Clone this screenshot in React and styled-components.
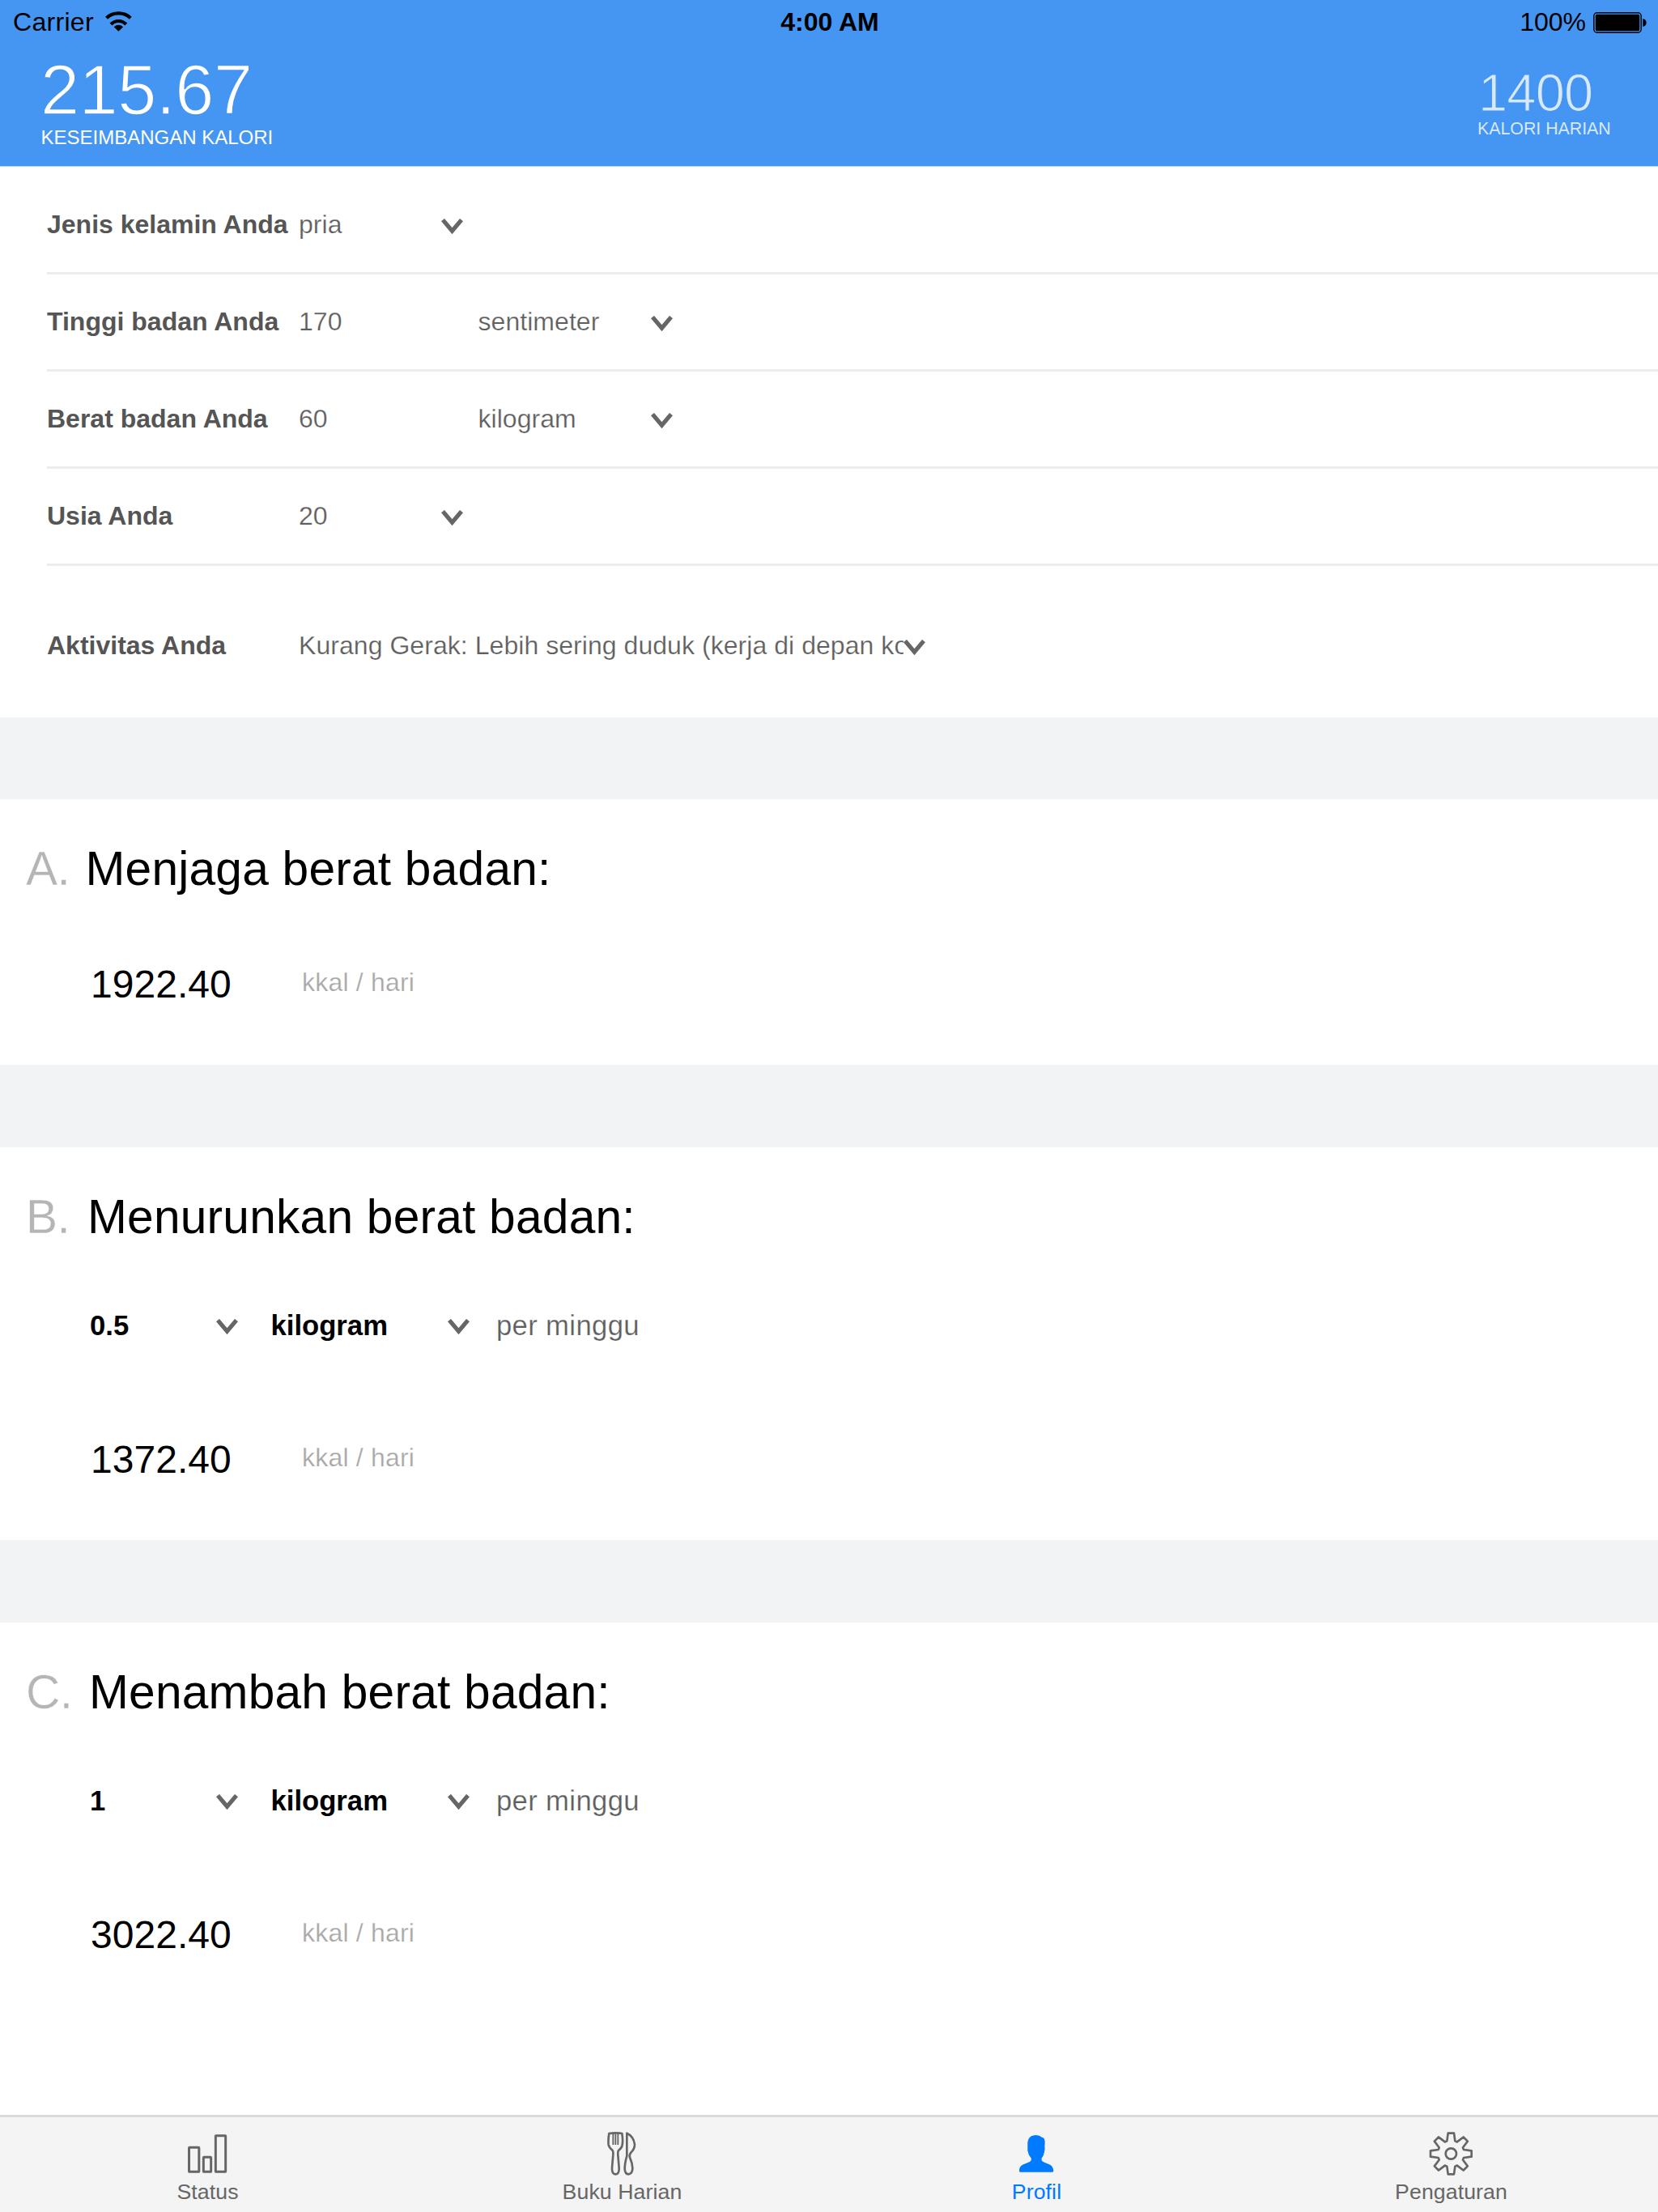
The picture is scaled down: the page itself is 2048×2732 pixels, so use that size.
import React from "react";
import styled, { createGlobalStyle, css } from "styled-components";

const BLUE = "#4595f2";
const INK = "#666666";

const GlobalStyle = createGlobalStyle`
  * { box-sizing: border-box; }
  body {
    margin: 0;
    background: #ffffff;
    font-family: "Liberation Sans", Arial, Helvetica, sans-serif;
    font-size: 32px;
  }
`;

/* A stroke in the surface colour slims the glyphs down to a light weight. */
const slim = (width, surface) => css`
  -webkit-text-stroke: ${width}px ${surface};
`;

const Screen = styled.div`
  display: flex;
  flex-direction: column;
  width: 2048px;
  height: 2732px;
  overflow: hidden;
  background: #ffffff;
`;

/* Header */

const Header = styled.header`
  flex: none;
  height: 206px;
  background: ${BLUE};
  border-bottom: 1px solid #b4d6fa;
`;

const StatusBar = styled.div`
  display: grid;
  grid-template-columns: 1fr auto 1fr;
  align-items: center;
  height: 55px;
  padding: 0 14px 0 16px;
  line-height: 55px;
  color: #000000;
`;

const Carrier = styled.div`
  display: flex;
  align-items: center;
  gap: 14px;
  letter-spacing: 0.3px;

  svg {
    margin-bottom: 2px;
  }
`;

const Clock = styled.div`
  font-weight: 700;
`;

const Power = styled.div`
  display: flex;
  align-items: center;
  justify-content: flex-end;
  gap: 9px;
`;

const Summary = styled.div`
  display: flex;
  justify-content: space-between;
  padding: 12px 58px 0 50px;
`;

const Balance = styled.div`
  color: #ffffff;
`;

const BalanceValue = styled.div`
  font-size: 86.5px;
  line-height: 89px;
  letter-spacing: -0.5px;
  ${slim(1.5, BLUE)}
`;

const BalanceLabel = styled.div`
  padding-left: 0.5px;
  font-size: 24px;
  line-height: 28px;
`;

const Daily = styled.div`
  width: 165px;
  padding-top: 14px;
  color: #d8e8fd;
  white-space: nowrap;
`;

const DailyValue = styled.div`
  padding-left: 1px;
  font-size: 65px;
  line-height: 68px;
  letter-spacing: -0.8px;
  ${slim(1.2, BLUE)}
`;

const DailyLabel = styled.div`
  font-size: 21.33px;
  line-height: 21px;
`;

/* Profile form */

const Form = styled.section`
  flex: none;
  height: 679.5px;
  padding-left: 58px;
`;

const FormRow = styled.div`
  display: flex;
  align-items: center;
  height: ${(p) => p.$height || 120}px;
  padding-top: ${(p) => p.$top || 0}px;
  border-bottom: ${(p) => (p.$last ? "none" : "3px solid #ededed")};
  color: ${INK};
  line-height: 40px;
`;

const RowLabel = styled.div`
  flex: none;
  width: 311px;
  margin-top: -2px;
  font-weight: 700;
  color: #555555;
  white-space: nowrap;
`;

const RowText = styled.div`
  flex: none;
  width: ${(p) => p.$width}px;
  margin-top: -2px;
  overflow: hidden;
  white-space: nowrap;
  color: #5e5e5e;
  letter-spacing: 0.05px;
  ${slim(0.25, "#ffffff")}
`;

const Arrow = styled.svg`
  flex: none;
  display: block;
  width: 27px;
  height: 19px;
  margin-top: ${(p) => p.$drop}px;
`;

/* Goals */

const Band = styled.div`
  flex: none;
  height: 101.33px;
  background: #f2f3f5;
`;

const Goal = styled.section`
  flex: none;
  padding: 56.4px 0 71.7px 32px;
`;

const GoalTitle = styled.h2`
  display: flex;
  margin: 0;
  font-size: 58.67px;
  font-weight: 400;
  line-height: 60px;
  letter-spacing: 0.22px;
  color: #000000;
`;

const GoalIndex = styled.span`
  flex: none;
  width: ${(p) => p.$width}px;
  letter-spacing: -0.6px;
  color: #b5b5b5;
  ${slim(0.3, "#ffffff")}
`;

const PaceRow = styled.div`
  display: flex;
  align-items: center;
  margin-top: 84px;
  padding-left: 79px;
  font-size: 34.67px;
  line-height: 40px;
`;

const PaceValue = styled.div`
  flex: none;
  width: 156px;
  font-weight: 700;
  color: #000000;
`;

const PaceMeasure = styled(PaceValue)`
  width: 218.5px;
  margin-left: 40.5px;
`;

const PaceUnit = styled.div`
  margin-left: 33px;
  color: #5e5e5e;
  letter-spacing: 0.35px;
  ${slim(0.25, "#ffffff")}
`;

const ResultRow = styled.div`
  display: flex;
  align-items: center;
  margin-top: ${(p) => p.$top}px;
  padding-left: 80px;
  line-height: 56px;
`;

const ResultValue = styled.div`
  width: 261px;
  font-size: 48px;
  letter-spacing: 0.05px;
  color: #000000;
`;

const ResultUnit = styled.div`
  margin-top: -5px;
  font-size: 32px;
  letter-spacing: 0.2px;
  color: #a8a8a8;
  ${slim(0.25, "#ffffff")}
`;

/* Tab bar */

const TabBar = styled.nav`
  flex: none;
  display: grid;
  grid-template-columns: repeat(4, 1fr);
  height: 120px;
  margin-top: auto;
  border-top: 3px solid #dadada;
  background: #f4f4f4;
`;

const Tab = styled.a`
  display: flex;
  flex-direction: column;
  align-items: center;
  padding-top: 15px;
  color: ${(p) => (p.$active ? "#007aff" : INK)};

  svg {
    display: block;
    width: 60px;
    height: 60px;
  }
`;

const TabLabel = styled.span`
  margin-top: 2px;
  padding-left: 1px;
  font-size: 26.67px;
  line-height: 30px;
  letter-spacing: 0.1px;
`;

const Chevron = ({ drop = 4 }) => (
  <Arrow viewBox="0 0 27 19" $drop={drop}>
    <path d="M2 1.6 13.5 15.2 25 1.6" fill="none" stroke="#666666" strokeWidth="5.2" />
  </Arrow>
);

const WifiIcon = () => (
  <svg width="33" height="25" viewBox="0 0 33 25" fill="none" stroke="#000" strokeWidth="4.2">
    <path d="M1.5 8.2A22 22 0 0 1 31.3 8.2" />
    <path d="M7 16A13 13 0 0 1 25.8 16" />
    <path d="M16.4 24.8 10.7 19.2Q16.4 14.4 22.1 19.2Z" fill="#000" stroke="none" />
  </svg>
);

const BatteryIcon = () => (
  <svg width="66" height="26" viewBox="0 0 66 26">
    <rect x="0.8" y="0.8" width="58.4" height="24.4" rx="4" fill="none" stroke="#000" strokeWidth="1.4" />
    <rect x="2.8" y="2.8" width="54.4" height="20.4" rx="1.5" fill="#000" />
    <path d="M61.3 8Q65.6 9 65.6 13T61.3 18Z" fill="#000" />
  </svg>
);

const StatusIcon = () => (
  <svg viewBox="138 90 180 180" fill="none" stroke="currentColor" strokeWidth="9" strokeLinejoin="round">
    <rect x="160.5" y="157" width="37" height="90" rx="2" />
    <rect x="214" y="193" width="28" height="54" rx="2" />
    <rect x="259" y="113" width="37" height="134" rx="2" />
  </svg>
);

const CutleryIcon = () => (
  <svg viewBox="204 90 180 180" fill="none" stroke="currentColor" strokeWidth="8" strokeLinejoin="round">
    <path d="M247 105Q271 101 295 105Q299 130 296 147Q295 157 282 168Q279 172 280 185L284 232Q285 256 271 256Q257 256 258 232L262 185Q263 172 260 168Q247 157 245 147Q243 130 247 105Z" />
    <path d="M262 105V147M271 105V147M280 105V147" strokeWidth="5.5" />
    <path d="M313 104V188Q305 216 305 236Q306 256 319 256Q334 254 334 233Q333 214 324 194Q321 186 327 177Q342 162 342 146Q338 115 313 104Z" />
  </svg>
);

const ProfileIcon = () => (
  <svg viewBox="150 90 180 180" fill="currentColor">
    <path d="M180 248Q177 248 177 243C177 229 184 222 196 218L214 211Q222 207 222 198Q212 188 210 175Q207 170 208 158L208 137Q211 112 239 111Q252 111 261 119Q272 120 272 139L271 156Q273 162 270 173Q268 188 259 199Q259 207 267 211L285 218C297 222 303 230 304 243Q304 248 300 248Z" />
  </svg>
);

const tooth = [[-15, -47], [-11, -76], [11, -76], [15, -47]];
const gearPath =
  Array.from({ length: 8 })
    .flatMap((_, i) => {
      const a = (i * Math.PI) / 4;
      return tooth.map(([x, y]) => [
        277 + x * Math.cos(a) - y * Math.sin(a),
        180 + x * Math.sin(a) + y * Math.cos(a),
      ]);
    })
    .map(([x, y], i) => `${i ? "L" : "M"}${x.toFixed(1)} ${y.toFixed(1)}`)
    .join("") + "Z";

const GearIcon = () => (
  <svg viewBox="186 90 180 180" fill="none" stroke="currentColor" strokeWidth="8" strokeLinejoin="round">
    <path d={gearPath} />
    <circle cx="277" cy="180" r="20" />
  </svg>
);

const fields = [
  { label: "Jenis kelamin Anda", value: "pria", width: 176, height: 133, top: 13 },
  { label: "Tinggi badan Anda", value: "170", width: 221.5, unit: "sentimeter" },
  { label: "Berat badan Anda", value: "60", width: 221.5, unit: "kilogram" },
  { label: "Usia Anda", value: "20", width: 176 },
  {
    label: "Aktivitas Anda",
    value: "Kurang Gerak: Lebih sering duduk (kerja di depan komputer)",
    width: 747,
    height: 197,
    last: true,
  },
];

const goals = [
  { index: "A.", indexWidth: 73.5, title: "Menjaga berat badan:", result: "1922.40" },
  { index: "B.", indexWidth: 76, title: "Menurunkan berat badan:", pace: "0.5", result: "1372.40" },
  { index: "C.", indexWidth: 78, title: "Menambah berat badan:", pace: "1", result: "3022.40" },
];

const tabs = [
  { label: "Status", Icon: StatusIcon },
  { label: "Buku Harian", Icon: CutleryIcon },
  { label: "Profil", Icon: ProfileIcon, active: true },
  { label: "Pengaturan", Icon: GearIcon },
];

export default function App() {
  return (
    <Screen>
      <GlobalStyle />
      <Header>
        <StatusBar>
          <Carrier>
            Carrier
            <WifiIcon />
          </Carrier>
          <Clock>4:00 AM</Clock>
          <Power>
            100%
            <BatteryIcon />
          </Power>
        </StatusBar>
        <Summary>
          <Balance>
            <BalanceValue>215.67</BalanceValue>
            <BalanceLabel>KESEIMBANGAN KALORI</BalanceLabel>
          </Balance>
          <Daily>
            <DailyValue>1400</DailyValue>
            <DailyLabel>KALORI HARIAN</DailyLabel>
          </Daily>
        </Summary>
      </Header>

      <Form>
        {fields.map((f) => (
          <FormRow key={f.label} $height={f.height} $top={f.top} $last={f.last}>
            <RowLabel>{f.label}</RowLabel>
            <RowText $width={f.width}>{f.value}</RowText>
            {f.unit && <RowText $width={213.5}>{f.unit}</RowText>}
            <Chevron />
          </FormRow>
        ))}
      </Form>

      {goals.map((g) => (
        <React.Fragment key={g.index}>
          <Band />
          <Goal>
            <GoalTitle>
              <GoalIndex $width={g.indexWidth}>{g.index}</GoalIndex>
              {g.title}
            </GoalTitle>
            {g.pace && (
              <PaceRow>
                <PaceValue>{g.pace}</PaceValue>
                <Chevron drop={2.5} />
                <PaceMeasure>kilogram</PaceMeasure>
                <Chevron drop={2.5} />
                <PaceUnit>per minggu</PaceUnit>
              </PaceRow>
            )}
            <ResultRow $top={g.pace ? 117.6 : 84.3}>
              <ResultValue>{g.result}</ResultValue>
              <ResultUnit>kkal / hari</ResultUnit>
            </ResultRow>
          </Goal>
        </React.Fragment>
      ))}

      <TabBar>
        {tabs.map(({ label, Icon, active }) => (
          <Tab key={label} $active={active}>
            <Icon />
            <TabLabel>{label}</TabLabel>
          </Tab>
        ))}
      </TabBar>
    </Screen>
  );
}
